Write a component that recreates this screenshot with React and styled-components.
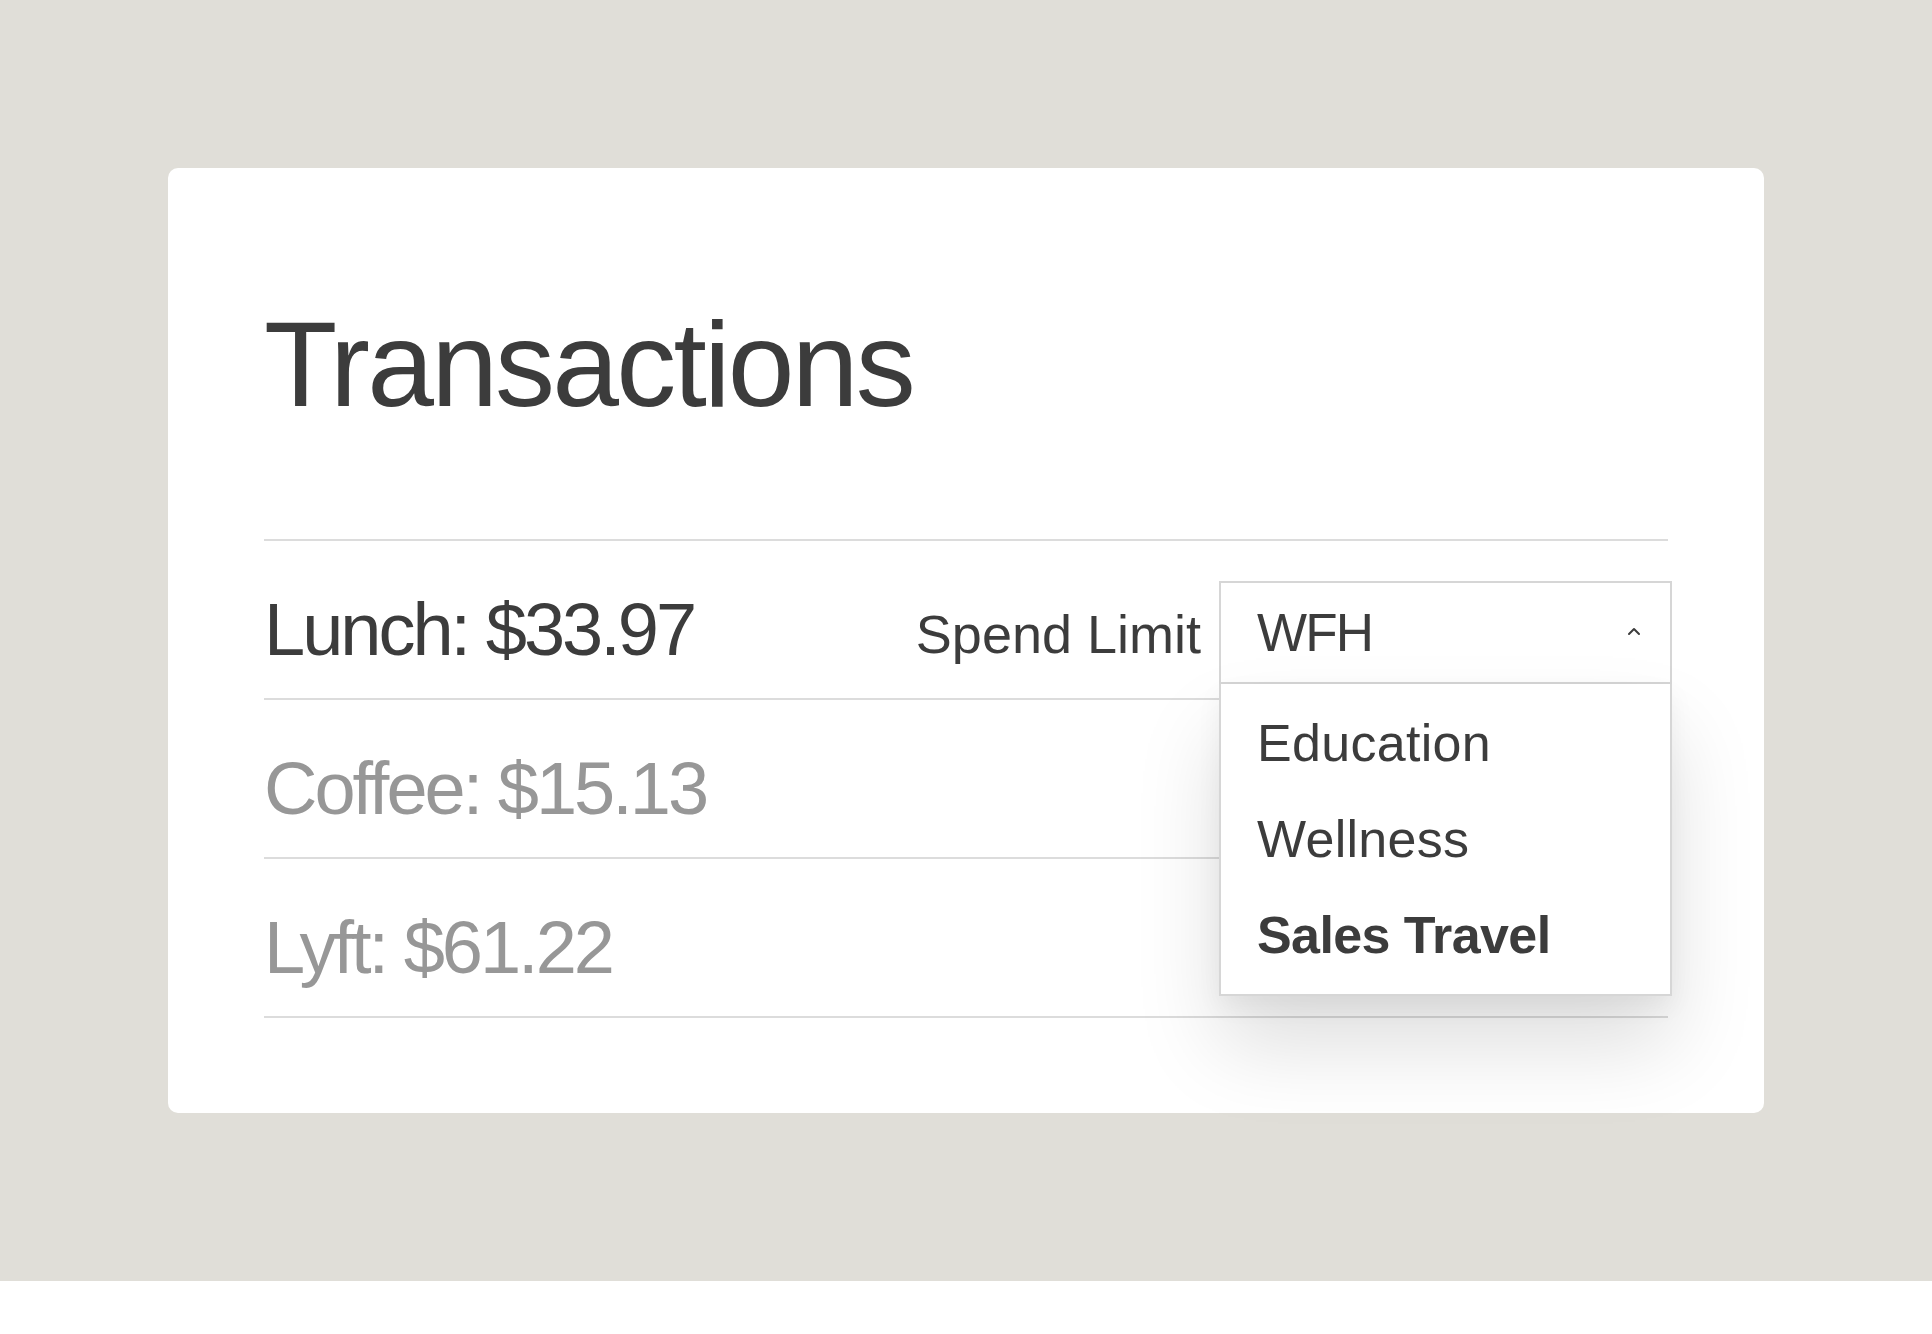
import React from 'react'
import styled, { createGlobalStyle } from 'styled-components'

const GlobalStyle = createGlobalStyle`
    body {
        margin: 0;
        background: #ffffff;
        font-family: 'Liberation Sans', Arial, sans-serif;
        color: #3c3c3c;
    }
`

const Stage = styled.div`
    background: #e0ded8;
    padding: 168px;
`

const Card = styled.div`
    background: #ffffff;
    border-radius: 10px;
    padding: 136px 96px 95px;
`

const Title = styled.h1`
    margin: 0 0 115px;
    font-size: 120px;
    line-height: 1;
    font-weight: 400;
    letter-spacing: -2.8px;
    color: #3c3c3c;
`

const List = styled.div`
    border-bottom: 2px solid #dcdcdc;
`

const Row = styled.div`
    box-sizing: border-box;
    height: 159px;
    border-top: 2px solid #dcdcdc;
    padding: 38px 0 18px;
    display: flex;
    align-items: center;
`

const Amount = styled.div`
    flex: 1;
    font-size: 74px;
    line-height: 1;
    letter-spacing: -3px;
    color: ${(props) => (props.muted ? '#979797' : '#3c3c3c')};
`

const Label = styled.span`
    font-size: 54px;
    line-height: 1;
    margin: 8px 18px 0 0;
    color: #3c3c3c;
`

const Select = styled.div`
    position: relative;
    width: 453px;
    margin-right: -4px;
    align-self: stretch;
`

const Trigger = styled.div`
    box-sizing: border-box;
    height: 103px;
    margin-top: 2px;
    border: 2px solid #d6d6d6;
    padding: 0 28px 0 36px;
    display: flex;
    align-items: center;
    justify-content: space-between;
    font-size: 53px;
    letter-spacing: -1.8px;
    color: #3c3c3c;
    background: #ffffff;

    svg {
        margin-top: -4px;
    }
`

const Menu = styled.div`
    position: absolute;
    left: 0;
    right: 0;
    top: 105px;
    box-sizing: border-box;
    border: 2px solid #d6d6d6;
    border-top: none;
    background: #ffffff;
    padding: 11px 0 11px 36px;
    box-shadow: 0 50px 80px rgba(0, 0, 0, 0.13), 0 10px 24px rgba(0, 0, 0, 0.05);
    z-index: 2;
`

const Option = styled.div`
    font-size: 52px;
    line-height: 96px;
    font-weight: ${(props) => (props.active ? 700 : 400)};
    letter-spacing: ${(props) => (props.active ? '-0.6px' : '0.3px')};
    color: #3c3c3c;
`

const Caret = () => (
    <svg width='16' height='10' viewBox='0 0 16 10' fill='none'>
        <path d='M3 8 L8 3 L13 8' stroke='#3c3c3c' strokeWidth='2' strokeLinecap='round' strokeLinejoin='round' />
    </svg>
)

const transactions = [
    { label: 'Coffee: $15.13' },
    { label: 'Lyft: $61.22' },
]

const App = () => {
    return (
        <>
            <GlobalStyle />
            <Stage>
                <Card>
                    <Title>Transactions</Title>
                    <List>
                        <Row>
                            <Amount>Lunch: $33.97</Amount>
                            <Label>Spend Limit</Label>
                            <Select>
                                <Trigger>
                                    WFH
                                    <Caret />
                                </Trigger>
                                <Menu>
                                    <Option>Education</Option>
                                    <Option>Wellness</Option>
                                    <Option active>Sales Travel</Option>
                                </Menu>
                            </Select>
                        </Row>
                        {transactions.map((t) => (
                            <Row key={t.label}>
                                <Amount muted>{t.label}</Amount>
                            </Row>
                        ))}
                    </List>
                </Card>
            </Stage>
        </>
    )
}

export default App
